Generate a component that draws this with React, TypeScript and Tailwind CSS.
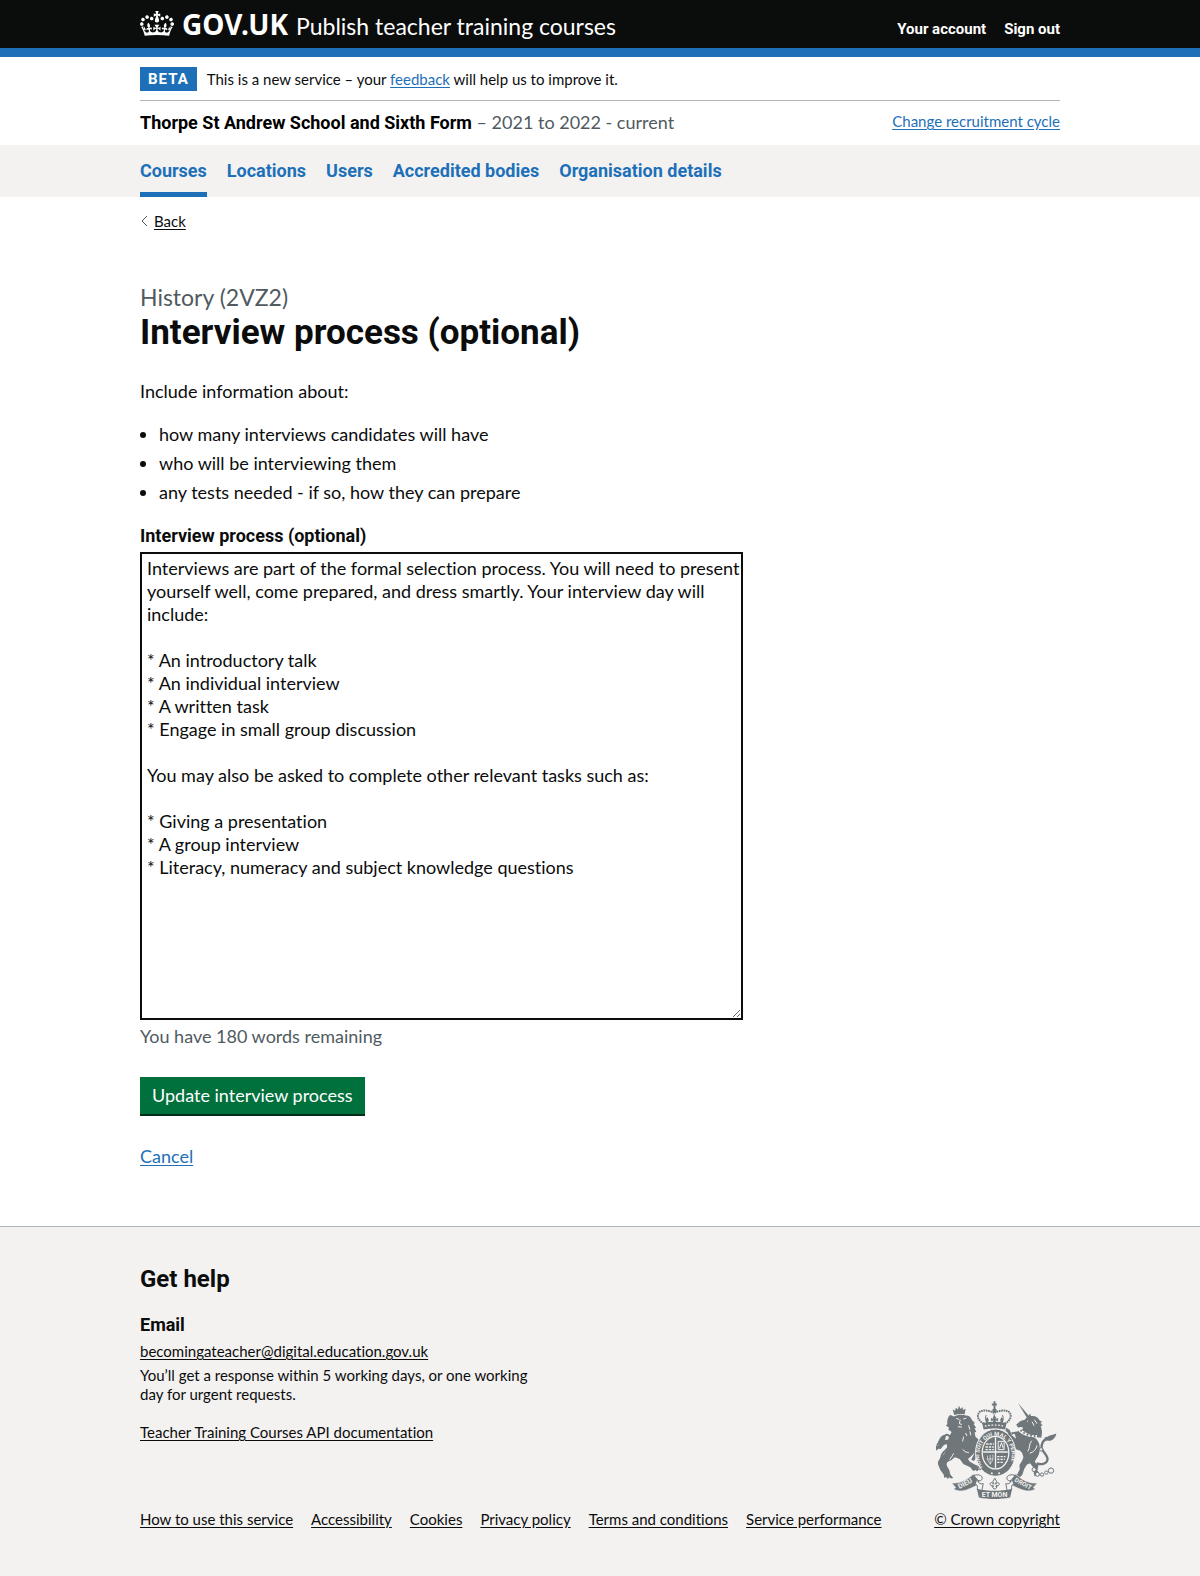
import { useState } from 'react';

const INITIAL_TEXT = `Interviews are part of the formal selection process. You will need to present yourself well, come prepared, and dress smartly. Your interview day will include:

* An introductory talk
* An individual interview
* A written task
* Engage in small group discussion

You may also be asked to complete other relevant tasks such as:

* Giving a presentation
* A group interview
* Literacy, numeracy and subject knowledge questions`;

const NAV_ITEMS = ['Courses', 'Locations', 'Users', 'Accredited bodies', 'Organisation details'];

const FOOTER_LINKS = [
  'How to use this service',
  'Accessibility',
  'Cookies',
  'Privacy policy',
  'Terms and conditions',
  'Service performance',
];

const BULLETS = [
  'how many interviews candidates will have',
  'who will be interviewing them',
  'any tests needed - if so, how they can prepare',
];

function CrownLogo() {
  return (
    <svg aria-hidden="true" viewBox="0 0 132 97" className="mb-0.5 h-[25px] w-[34px] shrink-0 fill-current">
      <path
        fillRule="evenodd"
        d="M25 30.2c3.5 1.5 7.7-.2 9.1-3.7 1.5-3.6-.2-7.8-3.9-9.2-3.6-1.4-7.6.3-9.1 3.9-1.4 3.5.3 7.5 3.9 9zM9 39.5c3.6 1.5 7.8-.2 9.2-3.7 1.5-3.6-.2-7.8-3.9-9.1-3.6-1.5-7.6.2-9.1 3.8-1.4 3.5.3 7.5 3.8 9zM4.4 57.2c3.5 1.5 7.7-.2 9.1-3.8 1.5-3.6-.2-7.7-3.9-9.1-3.5-1.5-7.6.3-9.1 3.8-1.4 3.5.3 7.6 3.9 9.1zm38.3-21.4c3.5 1.5 7.7-.2 9.1-3.8 1.5-3.6-.2-7.7-3.9-9.1-3.6-1.5-7.6.3-9.1 3.8-1.3 3.6.4 7.7 3.9 9.1zm64.4-5.6c-3.6 1.5-7.8-.2-9.1-3.7-1.5-3.6.2-7.8 3.8-9.2 3.6-1.4 7.7.3 9.2 3.9 1.3 3.5-.4 7.5-3.9 9zm15.9 9.3c-3.6 1.5-7.7-.2-9.1-3.7-1.5-3.6.2-7.8 3.7-9.1 3.6-1.5 7.7.2 9.2 3.8 1.5 3.5-.3 7.5-3.8 9zm4.7 17.7c-3.6 1.5-7.8-.2-9.2-3.8-1.5-3.6.2-7.7 3.9-9.1 3.6-1.5 7.7.3 9.2 3.8 1.3 3.5-.4 7.6-3.9 9.1zM89.3 35.8c-3.6 1.5-7.8-.2-9.2-3.8-1.4-3.6.2-7.7 3.9-9.1 3.6-1.5 7.7.3 9.2 3.8 1.4 3.6-.3 7.7-3.9 9.1zM69.7 17.7l8.9 4.7V9.3l-8.9 2.8c-.2-.3-.5-.6-.9-.9L72.4 0H59.6l3.5 11.2c-.3.3-.6.5-.9.9l-8.8-2.8v13.1l8.8-4.7c.3.3.6.7.9.9l-5 15.4v.1c-.2.8-.4 1.6-.4 2.4 0 4.1 3.1 7.5 7 8.1h.2c.3 0 .7.1 1 .1.4 0 .7 0 1-.1h.2c4-.6 7.1-4.1 7.1-8.1 0-.8-.1-1.7-.4-2.4V34l-5.1-15.4c.4-.2.7-.6 1-.9zM66 92.8c16.9 0 32.8 1.1 47.1 3.2 4-16.9 8.9-26.7 14-33.5l-9.6-3.4c1 4.9 1.1 7.2 0 10.2-1.5-1.4-3-4.3-4.2-8.7L108.6 76c2.8-2 5-3.2 7.5-3.3-4.4 9.4-10 11.9-13.6 11.2-4.3-.8-6.3-4.6-5.6-7.9 1-4.7 5.7-5.9 8-.5 4.3-8.7-3-11.4-7.6-8.8 7.1-7.2 7.9-13.5 2.1-21.1-8 6.1-8.1 12.3-4.5 20.8-4.7-5.4-12.1-2.5-9.5 6.2 3.4-5.2 7.9-2 7.2 3.1-.6 4.3-6.4 7.8-13.5 7.2-10.3-.9-10.9-8-11.2-13.8 2.5-.5 7.1 1.8 11 7.3L80.2 60c-4.1 4.4-8 5.3-12.3 5.4 1.4-4.4 8-11.6 8-11.6H55.5s6.4 7.2 7.9 11.6c-4.2-.1-8-1-12.3-5.4l1.4 16.4c3.9-5.5 8.5-7.7 10.9-7.3-.3 5.8-.9 12.8-11.1 13.8-7.2.6-12.9-2.9-13.5-7.2-.7-5 3.8-8.3 7.1-3.1 2.7-8.7-4.6-11.6-9.4-6.2 3.7-8.5 3.6-14.7-4.6-20.8-5.8 7.6-5 13.9 2.2 21.1-4.7-2.6-11.9.1-7.7 8.8 2.3-5.5 7.1-4.2 8.1.5.7 3.3-1.3 7.1-5.7 7.9-3.5.7-9-1.8-13.5-11.2 2.5.1 4.7 1.3 7.5 3.3l-4.7-15.4c-1.2 4.4-2.7 7.2-4.3 8.7-1.1-3-.9-5.3 0-10.2l-9.5 3.4c5 6.9 9.9 16.7 14 33.5 14.8-2.1 30.8-3.2 47.7-3.2z"
      />
    </svg>
  );
}

function RoyalArms() {
  return (
    <svg aria-hidden="true" viewBox="50 48 364 300" className="mr-[3px] h-[100px] w-[121px] text-[#6f777b]">
      <defs>
        <path id="garter" d="M190 250 A49 59 0 1 1 268 250" />
      </defs>
      {/* Lion */}
      <g fill="currentColor">
        <path d="M105 93l-5-17 7 4 3-9 6 5 3-11 5 10 6-6 1 9 8-4-3 17c-10-2-21-1-31 2z" />
        <path d="M104 97c10-5 25-6 36-3 10 0 16 6 18 14l9 9-4 3 8 11-5 1 5 11-5 2 3 14 8 6-2 22-6 12c-4 9-9 14-15 19l-8 7 6 8 16 9 20 7-3 10-6-2-5 5-6-4-6 3-9-11-21-10-10-14-14-6-17 8c-8 5-10 10-8 18l7 12 3 14 9 10-7 2-6-4-3 5-6-6-5 3-2-10-10-14c-3-9-9-16-7-25l7-12 8-7c7-9 12-15 13-24l-2-10-8 3-10 12-7-1-5 6-3-6-6-2 5-7 9-1 12-12c5-4 11-5 17-5l6-14 5-9-10-8 2-6-9-5 4-5c-1-13 3-25 10-27z" />
        <path d="M168 191l12 8-4 15-12 17-8-4 8-16z" />
        <path d="M73 153c-12 4-14 18-22 30 8 1 19-3 24-10 4-6 3-13 5-16z" />
      </g>
      <path d="M106 214c-12 17-29 21-37 13-7-9 1-21 12-30 14-11 18-30 9-41-6-7-14-3-18 5" fill="none" stroke="currentColor" strokeWidth="6" />
      <g stroke="#f3f2f1" strokeWidth="3" fill="none">
        <path d="M111 103l9 3M132 105l9-3M123 107l-3 12 8 2M116 128l12 1" />
        <path d="M148 124l4 13M152 142l3 12M139 147l4 9M103 208c-4 9-8 13-12 19M130 196c5 6 12 10 19 10M133 158l-3 14" />
      </g>
      {/* Unicorn */}
      <g fill="currentColor">
        <path d="M296 56l33 39-6 5z" />
        <path d="M317 107l8-9 9-10 1 8c15-2 22 5 27 13l8 5-6 2 7 9-8 0 4 10-10-3v6l-9-4-8 5c-9 1-18-1-25-6l-7-4-11 1-6-8 13-11z" />
        <path d="M316 126l48-5 5 22-2 18-27-3-32-20z" />
        <path d="M302 138c9 12 27 20 44 22 9 7 16 17 16 28 1 18-4 28-10 36l-5 9 11 12-3 15 9 14-17 3-3-8 2-14-13-17-10 4-8 14-5 16-9 10-15 3-5 5-4-3 4-10 13-5 8-16-1-13 8-13 4-10c-2-9-4-15-10-20l-14-5-9-22-16-15 3-11-8-7 2-9 11 7 6 16 13 10-4-14z" />
        <path d="M302 142l-5 12-13-5-6 4-2-8 16-3z" />
        <path d="M386 158c4-5 14-5 26-10-2 12-11 23-24 22-9 0-11-5-11-10z" />
      </g>
      <path d="M353 238c13 5 29 2 32-9 4-14-14-23-17-37-2-12 5-26 17-27" fill="none" stroke="currentColor" strokeWidth="7" />
      <path d="M303 135c13 14 29 20 51 18v6c-22 2-43-4-56-18z" fill="#f3f2f1" />
      <g fill="currentColor">
        <circle cx="306" cy="140" r="3" />
        <circle cx="315" cy="147" r="3" />
        <circle cx="325" cy="152" r="3" />
        <circle cx="336" cy="155" r="3" />
        <circle cx="347" cy="156" r="3" />
      </g>
      <path d="M338 170c-10 11-4 22-12 32M354 184c-2 12-10 20-22 24M346 107l8 12M339 113l6 12" stroke="#f3f2f1" strokeWidth="3" fill="none" />
      <circle cx="325" cy="111" r="2" fill="#f3f2f1" />
      <g stroke="currentColor" strokeWidth="3" fill="#f3f2f1">
        <circle cx="366" cy="196" r="5" />
        <circle cx="345" cy="257" r="6" />
        <circle cx="355" cy="271" r="6" />
        <circle cx="369" cy="272" r="5" />
        <circle cx="382" cy="266" r="5" />
        <circle cx="396" cy="260" r="8" />
      </g>
      {/* Royal crown */}
      <g fill="none" stroke="currentColor">
        <path d="M194 119c-17-9-23-24-13-35 10-9 33-4 44 3 11-7 35-12 45-3 10 11 3 26-13 35" strokeWidth="6" strokeDasharray="5 2" />
        <path d="M225 90v28M201 93c-4 8-2 16 3 24M250 93c4 8 2 16-3 24" strokeWidth="3" />
        <path d="M218 61h15M226 51v26" strokeWidth="6" />
      </g>
      <g fill="currentColor">
        <circle cx="226" cy="80" r="7" />
        <path d="M221 100l5-6 5 6-2 5 8-3v9l-8-2 2 7h-10l2-7-8 2v-9l8 3zM199 107l5-8 5 8-3 9h-5zM243 107l5-8 5 8-3 9h-5z" />
        <path d="M189 117c24-5 50-5 73 0l-4 19c-21-4-44-4-65 0z" />
      </g>
      <path d="M197 126c19-4 39-4 58 0" stroke="#f3f2f1" strokeWidth="4" strokeDasharray="5 5" fill="none" />
      {/* Garter and shield */}
      <ellipse cx="229" cy="206" rx="60" ry="71" fill="currentColor" stroke="#f3f2f1" strokeWidth="3" />
      <text fill="#f3f2f1" className="font-['Roboto'] text-[17px] font-bold">
        <textPath href="#garter">HONI SOIT QUI MAL Y PENSE</textPath>
      </text>
      <ellipse cx="229" cy="206" rx="42" ry="51" fill="#f3f2f1" />
      <ellipse cx="229" cy="206" rx="38" ry="47" fill="currentColor" />
      <g fill="none" stroke="#f3f2f1">
        <path d="M229 160v92M192 204h74" strokeWidth="4" />
        <path d="M201 180h23M199 189h25M199 197h25M234 218h25M234 226h23M234 235h19" strokeWidth="4" strokeDasharray="7 3" />
        <path d="M237 172h18v25h-18zM241 193l6-17 5 17" strokeWidth="3" />
        <path d="M205 215c-2 11 2 19 9 25M213 213v29M221 212c2 11-1 21-8 28M203 225h19" strokeWidth="2" />
      </g>
      <g fill="#f3f2f1">
        <circle cx="218" cy="268" r="3" />
        <circle cx="240" cy="268" r="3" />
      </g>
      {/* Motto ribbon */}
      <g fill="currentColor" stroke="#f3f2f1" strokeWidth="2">
        <path d="M97 297c24 3 46-9 65-26l21 4-3 26c-17 8-34 18-50 20-10 1-20-1-27-6l6-4z" />
        <path d="M355 297c-24 3-46-9-65-26l-22 4 4 26c17 8 34 18 50 20 10 1 20-1 27-6l-6-4z" />
      </g>
      <g fill="#f3f2f1" stroke="currentColor" strokeWidth="3">
        <path d="M164 275c10-5 25-2 25 8 0 8-11 10-14 4 0 9 8 15 17 12l-4 22-14-4c2-9 0-15-6-17l5-15z" />
        <path d="M288 275c-10-5-25-2-25 8 0 8 11 10 14 4 0 9-8 15-17 12l4 22 14-4c-2-9 0-15 6-17l-5-15z" />
      </g>
      <path d="M173 315c35 7 71 7 106 0l-6 26c-31 6-64 6-94 0z" fill="currentColor" />
      <g fill="#f3f2f1" className="font-['Roboto'] text-[21px] font-bold">
        <text x="226" y="338" textAnchor="middle">
          ET MON
        </text>
        <text x="141" y="305" textAnchor="middle" transform="rotate(-28 141 305)">
          DIEU
        </text>
        <text x="309" y="305" textAnchor="middle" transform="rotate(28 309 305)" className="text-[19px]">
          DROIT
        </text>
      </g>
      <path d="M227 283l5 9-3 9c6-8 12-5 11 1-2 5-7 4-7 1l-3 5h4l-5 7h-5l-5-7h4l-3-5c0 3-5 4-7-1-1-6 5-9 11-1l-3-9z" fill="none" stroke="currentColor" strokeWidth="3" />
    </svg>
  );
}

export default function App() {
  const [text, setText] = useState(INITIAL_TEXT);

  return (
    <div className="bg-[#f3f2f1] font-['Lato',sans-serif] text-[18px] leading-[23px] text-[#0b0c0c] [font-variant-ligatures:none]">
      <header className="bg-[#0b0c0c] px-4 text-white">
        <div className="mx-auto flex min-h-12 max-w-[920px] flex-wrap items-center justify-between gap-x-6">
          <a href="#" className="flex items-center gap-x-2">
            <CrownLogo />
            <span className="flex items-baseline gap-x-2">
              <span className="font-['Noto_Sans',sans-serif] text-[28px] leading-[48px] font-bold">GOV.UK</span>
              <span className="text-[23px]">Publish teacher training courses</span>
            </span>
          </a>
          <nav aria-label="Account" className="flex gap-x-[18px] pt-2.5 font-['Roboto',sans-serif] text-[15px] font-bold">
            <a href="#">Your account</a>
            <a href="#">Sign out</a>
          </nav>
        </div>
      </header>
      <div className="h-[9px] bg-[#1d70b8]" />

      <div className="bg-white px-4">
        <div className="mx-auto max-w-[920px]">
          <div className="flex items-center gap-x-2.5 border-b border-[#b1b4b6] pt-2.5 pb-[9px] text-[15px] leading-6">
            <strong className="bg-[#1d70b8] px-2 font-['Roboto',sans-serif] tracking-[1px] text-white">BETA</strong>
            <p>
              This is a new service – your{' '}
              <a href="#" className="text-[#1d70b8] underline underline-offset-2">
                feedback
              </a>{' '}
              will help us to improve it.
            </p>
          </div>
          <div className="flex flex-wrap items-start justify-between gap-x-6 pt-2.5 pb-[11px]">
            <p className="text-[#505a5f]">
              <strong className="font-['Roboto',sans-serif] text-black">Thorpe St Andrew School and Sixth Form</strong> –
              2021 to 2022 - current
            </p>
            <a href="#" className="text-[15px] leading-5 text-[#1d70b8] underline underline-offset-2">
              Change recruitment cycle
            </a>
          </div>
        </div>
      </div>

      <nav aria-label="Primary" className="px-4 font-['Roboto',sans-serif]">
        <ul className="mx-auto flex max-w-[920px] flex-wrap gap-x-5">
          {NAV_ITEMS.map((item, i) => (
            <li key={item}>
              <a
                href="#"
                aria-current={i === 0 ? 'page' : undefined}
                className="block border-b-5 border-transparent pt-3.5 pb-2.5 font-bold text-[#1d70b8] aria-[current=page]:border-[#1d70b8]"
              >
                {item}
              </a>
            </li>
          ))}
        </ul>
      </nav>

      <div className="bg-white px-4 pt-3 pb-[58px]">
        <div className="mx-auto max-w-[920px]">
          <a href="#" className="inline-flex items-center gap-x-1.5 text-[15px] leading-5">
            <svg aria-hidden="true" viewBox="0 0 8 12" className="h-3 w-2 fill-none stroke-[#505a5f]">
              <path d="M7 1L2 6l5 5" />
            </svg>
            <span className="underline underline-offset-2">Back</span>
          </a>

          <main className="pt-[51px]">
            <h1 className="font-['Roboto',sans-serif] text-[35px] leading-[38px] font-bold">
              <span className="mb-0.5 block font-['Lato',sans-serif] text-[23px] leading-[29px] font-normal text-[#505a5f]">
                History (2VZ2)
              </span>
              Interview process (optional)
            </h1>
            <p className="mt-7">Include information about:</p>
            <ul className="mt-5 mb-5 list-disc space-y-1.5 pl-[19px]">
              {BULLETS.map((item) => (
                <li key={item}>{item}</li>
              ))}
            </ul>
            <form onSubmit={(e) => e.preventDefault()}>
              <label htmlFor="interview-process" className="block font-['Roboto',sans-serif] font-bold">
                Interview process (optional)
              </label>
              <textarea
                id="interview-process"
                value={text}
                onChange={(e) => setText(e.target.value)}
                className="mt-[5px] block h-[468px] w-full max-w-[603px] border-2 border-[#0b0c0c] bg-white pt-[3px] pb-[5px] pl-[5px]"
              />
              <p className="mt-[5px] text-[#505a5f]">You have 180 words remaining</p>
              <button type="submit" className="mt-[29px] bg-[#00703c] px-3 py-[7px] text-white shadow-[0_2px_0_#002d18]">
                Update interview process
              </button>
            </form>
            <p className="mt-[31px]">
              <a href="#" className="text-[#1d70b8] underline underline-offset-2">
                Cancel
              </a>
            </p>
          </main>
        </div>
      </div>

      <footer className="border-t border-[#b1b4b6] px-4 pt-[38px] pb-[47px] text-[15px] leading-[19px]">
        <div className="mx-auto max-w-[920px]">
          <h2 className="font-['Roboto',sans-serif] text-[24px] leading-[29px] font-bold">Get help</h2>
          <div className="flex flex-wrap items-end justify-between gap-x-6 gap-y-4">
            <div className="max-w-[400px] pb-[58px]">
              <h3 className="mt-[19px] font-['Roboto',sans-serif] text-[18px] leading-[23px] font-bold">Email</h3>
              <p className="mt-1.5">
                <a href="#" className="underline underline-offset-2">
                  becomingateacher@digital.education.gov.uk
                </a>
              </p>
              <p className="mt-[5px]">You’ll get a response within 5 working days, or one working day for urgent requests.</p>
              <p className="mt-[19px]">
                <a href="#" className="underline underline-offset-2">
                  Teacher Training Courses API documentation
                </a>
              </p>
            </div>
            <RoyalArms />
          </div>
          <div className="mt-2.5 flex flex-wrap justify-between gap-x-4 gap-y-2">
            <ul className="flex flex-wrap gap-x-[18px] gap-y-2">
              {FOOTER_LINKS.map((item) => (
                <li key={item}>
                  <a href="#" className="underline underline-offset-2">
                    {item}
                  </a>
                </li>
              ))}
            </ul>
            <a href="#" className="underline underline-offset-2">
              © Crown copyright
            </a>
          </div>
        </div>
      </footer>
    </div>
  );
}
